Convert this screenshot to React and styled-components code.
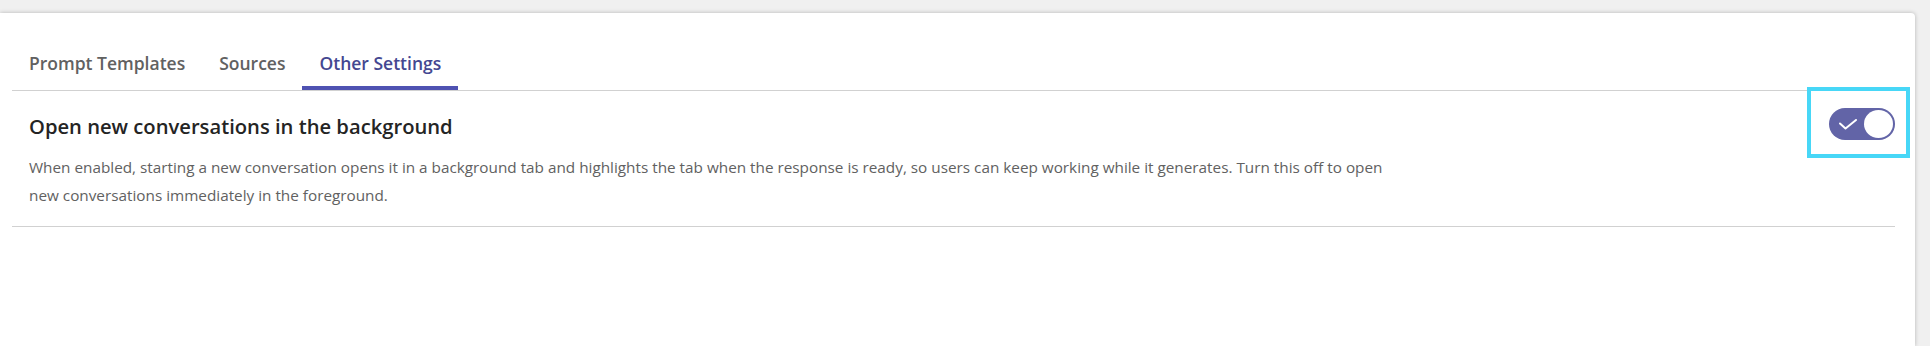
import styled, { createGlobalStyle } from "styled-components";

const GlobalStyle = createGlobalStyle`
  html, body {
    margin: 0;
    padding: 0;
    background: #f0f0f0;
    overflow: hidden;
  }
  body {
    font-family: "Open Sans", "Noto Sans", "Liberation Sans", sans-serif;
  }
`;

const Page = styled.div`
  height: 100vh;
  box-sizing: border-box;
  padding: 13px 15px 0 0;
`;

const Panel = styled.div`
  height: 100%;
  box-sizing: border-box;
  background: #fff;
  border-top-right-radius: 4px;
  box-shadow: 0 0 4px rgba(0, 0, 0, 0.25);
  padding: 30px 20px 0 12px;
`;

const TabList = styled.div`
  display: flex;
  border-bottom: 1px solid #d1d1d1;
`;

const Tab = styled.div`
  padding: 8px 17px 11px;
  font-size: 17.5px;
  line-height: 24px;
  font-weight: 600;
  color: ${(p) => (p.active ? "#444791" : "#616161")};
  border-bottom: 4px solid ${(p) => (p.active ? "#4f52b2" : "transparent")};
  white-space: nowrap;
  cursor: pointer;
`;

const SettingRow = styled.div`
  display: flex;
  align-items: flex-start;
  justify-content: space-between;
  padding: 0 0 17px 17px;
  border-bottom: 1px solid #d1d1d1;
`;

const SettingText = styled.div`
  padding-top: 21px;
  max-width: 1378px;
`;

const Title = styled.div`
  font-size: 20.2px;
  line-height: 28px;
  font-weight: 600;
  color: #242424;
`;

const Description = styled.div`
  margin-top: 13px;
  font-size: 15.3px;
  line-height: 28px;
  color: #616161;
`;

const FocusRing = styled.div`
  flex: none;
  padding: 17px 11px 14px 18px;
  margin-right: -11px;
  outline: 4px solid #47d7f7;
`;

const Track = styled.div`
  width: 66px;
  height: 32px;
  box-sizing: border-box;
  border-radius: 16px;
  background: #6264a7;
  display: flex;
  align-items: center;
  justify-content: space-between;
  padding: 0 2px 0 10px;
`;

const Knob = styled.div`
  width: 29px;
  height: 28px;
  border-radius: 50%;
  background: #fff;
`;

export default function App() {
  return (
    <>
      <GlobalStyle />
      <Page>
        <Panel>
          <TabList>
            <Tab>Prompt Templates</Tab>
            <Tab>Sources</Tab>
            <Tab active>Other Settings</Tab>
          </TabList>
          <SettingRow>
            <SettingText>
              <Title>Open new conversations in the background</Title>
              <Description>
                When enabled, starting a new conversation opens it in a background tab and
                highlights the tab when the response is ready, so users can keep working while it
                generates. Turn this off to open new conversations immediately in the foreground.
              </Description>
            </SettingText>
            <FocusRing>
              <Track>
                <svg width="18" height="11" viewBox="0 0 18 11" fill="none">
                  <polyline
                    points="1,4.5 6.5,9.5 17,1"
                    stroke="#fff"
                    strokeWidth="2"
                    strokeLinecap="round"
                    strokeLinejoin="round"
                  />
                </svg>
                <Knob />
              </Track>
            </FocusRing>
          </SettingRow>
        </Panel>
      </Page>
    </>
  );
}
